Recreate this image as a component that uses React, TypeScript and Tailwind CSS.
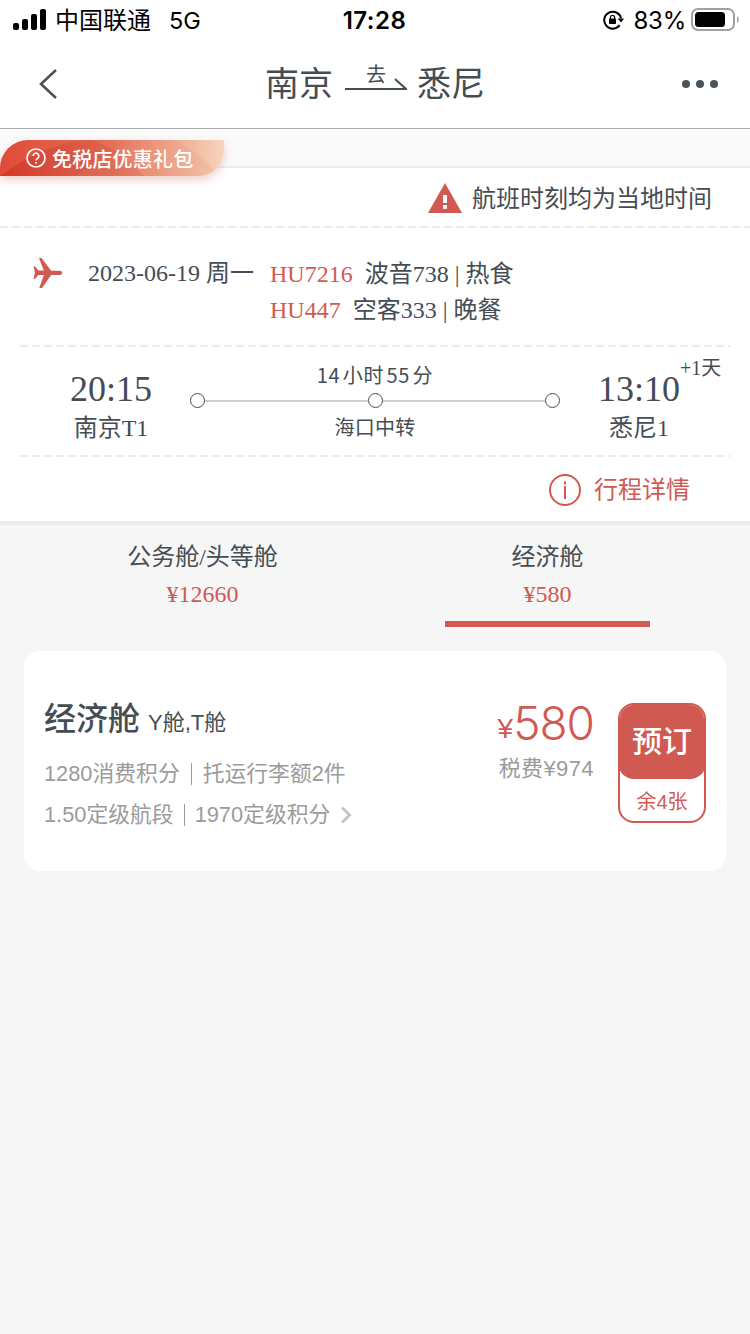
import type { ReactNode } from 'react';
import clsx from 'clsx';

interface Cabin {
  name: string;
  price: string;
  active?: boolean;
}

const cabins: Cabin[] = [
  { name: '公务舱/头等舱', price: '¥12660' },
  { name: '经济舱', price: '¥580', active: true },
];

const flights = [
  { no: 'HU7216', info: '波音738 | 热食' },
  { no: 'HU447', info: '空客333 | 晚餐' },
];

const StatusBar = () => (
  <div className="flex h-10 items-center pl-[13px] pr-[11px] font-['Inter','Noto_Sans_CJK_SC',sans-serif] text-black">
    <div className="flex flex-1 items-center">
      <svg width="33" height="22" viewBox="0 0 33 22" fill="currentColor">
        <rect x="0" y="14" width="6" height="7" rx="2" />
        <rect x="9" y="10" width="6" height="11" rx="2" />
        <rect x="18" y="5" width="6" height="16" rx="2" />
        <rect x="27" y="0" width="6" height="21" rx="2" />
      </svg>
      <span className="ml-[9px] pt-0.5 text-2xl leading-10">中国联通</span>
      <span className="ml-[18px] pt-0.5 text-[23.5px] leading-10">5G</span>
    </div>
    <span className="-ml-[3px] pt-0.5 text-[24px] font-semibold leading-10 tracking-[0.5px]">17:28</span>
    <div className="flex flex-1 items-center justify-end">
      {/* Rotation lock */}
      <svg width="21" height="20" viewBox="0 0 21 20" fill="none" stroke="currentColor">
        <path d="M18 8.200A8.500 8.500 0 1 0 16.600 15.200" strokeWidth="2" />
        <path d="M14.600 8.400h6.400l-3 4.200z" fill="currentColor" stroke="none" />
        <rect x="6" y="8.600" width="7" height="5.400" rx="0.800" fill="currentColor" stroke="none" />
        <path d="M7.400 9V7.400a2.100 2.100 0 0 1 4.200 0V9" strokeWidth="1.300" />
      </svg>
      <span className="ml-[9px] pt-0.5 text-[24px] leading-10 tracking-[-0.2px]">83%</span>
      <svg className="ml-[5px]" width="48" height="24" viewBox="0 0 48 24" fill="none">
        <rect x="1" y="1" width="42" height="21" rx="6" stroke="#a0a0a0" strokeWidth="2" />
        <rect x="4" y="4" width="30" height="15" rx="3.500" fill="#000" />
        <path d="M46 8c2.400 1.600 2.400 5.400 0 7z" fill="#a0a0a0" />
      </svg>
    </div>
  </div>
);

const NavBar = () => (
  <div className="flex h-[89px] items-center justify-between border-b border-[#a9abad] pl-[38px] pr-8">
    <svg width="54" height="32" viewBox="0 0 54 32" fill="none" stroke="#4a535a" strokeWidth="2.600">
      <path d="M18 2L3 16l15 14" />
    </svg>
    <div className="flex items-center pt-px text-[34px] leading-[50px]">
      <span>南京</span>
      <div className="mb-[15px] ml-3 mr-2.5 flex w-[62px] flex-col items-center">
        <span className="h-[22px] text-xl leading-[22px]">去</span>
        <svg className="-mt-[9px]" width="62" height="14" viewBox="0 0 62 14" fill="none" stroke="#454d54" strokeWidth="2">
          <path d="M0 12h61L50 2" />
        </svg>
      </div>
      <span>悉尼</span>
    </div>
    <svg className="ml-6" width="36" height="8" viewBox="0 0 36 8" fill="#4a535a">
      <circle cx="4" cy="4" r="4" />
      <circle cx="18" cy="4" r="4" />
      <circle cx="32" cy="4" r="4" />
    </svg>
  </div>
);

const GiftBadge = () => (
  <div className="absolute left-0 top-[11px] flex h-9 w-56 items-center overflow-hidden rounded-br-[26px] rounded-tl-[28px] bg-gradient-to-r from-[#e04a38] via-[#e2705a] to-[#f5d5bd] pl-[26px] text-white">
    <svg className="absolute inset-0" width="224" height="36" viewBox="0 0 224 36">
      <defs>
        <linearGradient id="wave" x1="0" x2="1">
          <stop offset="0" stopColor="#c92a1c" stopOpacity="0.55" />
          <stop offset="1" stopColor="#d9634c" stopOpacity="0.35" />
        </linearGradient>
      </defs>
      <path d="M0 36Q45 3 86 0q22 0 58 36z" fill="url(#wave)" />
      <path d="M76 36Q130 2 165 0q25 0 54 36z" fill="#e8916f" opacity="0.18" />
    </svg>
    <svg className="relative" width="20" height="20" viewBox="0 0 20 20" fill="none" stroke="#fff" strokeWidth="1.700">
      <circle cx="10" cy="10" r="9" />
      <path d="M7.200 8a2.800 2.800 0 1 1 4.400 2.300c-1 .7-1.600 1.100-1.600 2.200" />
      <path d="M10 13.900v1.700" />
    </svg>
    <span className="relative ml-1.5 pt-[3px] text-xl font-medium leading-9 tracking-[0.200px]">免税店优惠礼包</span>
  </div>
);

const DashedLine = ({ className }: { className?: string }) => (
  <div
    className={clsx(
      'h-0.5 bg-[repeating-linear-gradient(90deg,#ececec_0_8px,transparent_8px_12px)]',
      className,
    )}
  />
);

const Endpoint = ({ time, place, children }: { time: string; place: string; children?: ReactNode }) => (
  <div className="relative flex w-[158px] flex-col items-center pt-[21px]">
    <span className="text-[36px] leading-[42px]">{time}</span>
    <span className="text-2xl leading-9">{place}</span>
    {children}
  </div>
);

const FlightInfo = () => (
  <section className="border-b-4 border-[#ececec] bg-white">
    <div className="flex h-[58px] items-center justify-end pr-[38px] pt-0.5">
      <svg width="34" height="30" viewBox="0 0 34 30">
        <path d="M17 0l17 30H0z" fill="#d05a52" />
        <path d="M15 12h4v8h-4zM15 22h4v4h-4z" fill="#fff" />
      </svg>
      <span className="ml-2.5 pt-px text-2xl">航班时刻均为当地时间</span>
    </div>
    <DashedLine />

    <div className="flex h-[117px] items-start pl-[33px] pt-7 text-2xl leading-9">
      <svg className="mt-0.5" width="30" height="30" viewBox="0 0 30 30" fill="#d05a52">
        <path d="M6 0h2.500l9.700 12.700h8.300c1.700 0 2.700 1 2.700 2.100s-1 2.100-2.700 2.100h-8.300L9 30H6.300l4.500-12.900H5.200L2.200 20.800l-1.600.3 1.300-6.300L0.600 8l1.700.4 3 4.200h5.500z" />
      </svg>
      <span className="-mt-px ml-[25px] w-[182px]">2023-06-19 周一</span>
      <div>
        {flights.map((flight) => (
          <div key={flight.no} className="flex gap-3">
            <span className="text-[#d05a52]">{flight.no}</span>
            <span>{flight.info}</span>
          </div>
        ))}
      </div>
    </div>
    <DashedLine className="mx-5" />

    <div className="flex h-[108px] px-8">
      <Endpoint time="20:15" place="南京T1" />
      <div className="flex flex-1 flex-col items-center pt-3 font-['Noto_Sans_CJK_SC',sans-serif] text-xl">
        <span className="leading-8 tracking-[0.600px] [word-spacing:-2.5px]">14 小时 55 分</span>
        <div className="mb-px mt-0.5 flex w-full items-center">
          <i className="size-[15px] rounded-full border border-[#4a4a55]" />
          <i className="h-0.5 flex-1 bg-[#cfcfcf]" />
          <i className="size-[15px] rounded-full border border-[#4a4a55]" />
          <i className="h-0.5 flex-1 bg-[#cfcfcf]" />
          <i className="size-[15px] rounded-full border border-[#4a4a55]" />
        </div>
        <span className="pt-0.5 leading-8 tracking-[0.300px]">海口中转</span>
      </div>
      <Endpoint time="13:10" place="悉尼1">
        <span className="absolute left-[120px] top-[7px] whitespace-nowrap text-xl leading-7">+1天</span>
      </Endpoint>
    </div>
    <DashedLine className="mx-5" />

    <div className="flex h-16 items-center justify-end pr-[60px] pt-0.5 text-[#d05a52]">
      <svg width="32" height="32" viewBox="0 0 32 32" fill="none" stroke="currentColor" strokeWidth="2">
        <circle cx="16" cy="16" r="15" />
        <path d="M16 12v13M16 7.500v3" />
      </svg>
      <span className="ml-[13px] text-2xl">行程详情</span>
    </div>
  </section>
);

const CabinTabs = () => (
  <div className="flex h-[102px] justify-between px-[100px]">
    {cabins.map((cabin) => (
      <div
        key={cabin.name}
        className={clsx(
          'flex w-[205px] flex-col items-center border-b-6 pt-3.5 text-2xl',
          cabin.active ? 'border-[#d05a52]' : 'border-transparent',
        )}
      >
        <span className="leading-9">{cabin.name}</span>
        <span className="leading-[38px] text-[#d05a52]">{cabin.price}</span>
      </div>
    ))}
  </div>
);

const FareCard = () => (
  <div className="mx-6 mt-6 flex h-[220px] rounded-2xl bg-white pl-5 pr-5 font-['Liberation_Sans','Noto_Sans_CJK_SC',sans-serif]">
    <div className="flex-1 pt-[43px]">
      <div className="flex items-baseline leading-[50px]">
        <span className="text-[32px] font-medium">经济舱</span>
        <span className="ml-2 text-[22px]">Y舱,T舱</span>
      </div>
      <div className="mt-[5px] text-[21.800px] leading-[41px] text-[#9b9b9b]">
        <div className="flex items-center">
          <span>1280消费积分</span>
          <i className="mx-[11px] h-[22px] w-px bg-[#9b9b9b]" />
          <span>托运行李额2件</span>
        </div>
        <div className="flex items-center">
          <span>1.50定级航段</span>
          <i className="mx-[10px] h-[22px] w-px bg-[#9b9b9b]" />
          <span>1970定级积分</span>
          <svg className="ml-[11px]" width="11" height="18" viewBox="0 0 11 18" fill="none" stroke="#c4c4c4" strokeWidth="3">
            <path d="M1 1.500L8.500 9 1 16.500" />
          </svg>
        </div>
      </div>
    </div>

    <div className="flex flex-col items-end pr-6 pt-[46px]">
      <div className="flex items-baseline text-[#d05a52]">
        <span className="relative -top-0.5 text-[28px] leading-[46px]">¥</span>
        <span className="font-['Inter',sans-serif] text-[46px] font-light leading-[52px] tracking-[-1px]">580</span>
      </div>
      <span className="-mt-1 text-[22px] leading-[38px] tracking-[0.400px] text-[#9b9b9b]">税费¥974</span>
    </div>

    <button className="mt-[52px] flex h-[120px] w-[88px] flex-col overflow-hidden rounded-2xl border-2 border-[#d05a52]">
      <span className="-mx-0.5 -mt-0.5 h-[76px] self-stretch rounded-2xl bg-[#d05a52] text-[30px] font-medium leading-[78px] text-white">
        预订
      </span>
      <span className="self-stretch text-xl leading-[46px] text-[#d05a52]">余4张</span>
    </button>
  </div>
);

export default function App() {
  return (
    <div className="min-h-[1334px] w-[750px] bg-[#f6f6f6] font-['Liberation_Serif','Noto_Sans_CJK_SC',serif] text-[#454d54]">
      <header className="bg-white">
        <StatusBar />
        <NavBar />
      </header>
      <div className="relative h-[39px] border-b-2 border-[#ececec] bg-[#fafafa]">
        <div className="absolute left-0 top-[11px] h-9 w-56 rounded-br-[26px] rounded-tl-[28px] shadow-[0_4px_8px_rgba(200,120,120,0.35)]" />
        <GiftBadge />
      </div>
      <FlightInfo />
      <CabinTabs />
      <FareCard />
    </div>
  );
}
